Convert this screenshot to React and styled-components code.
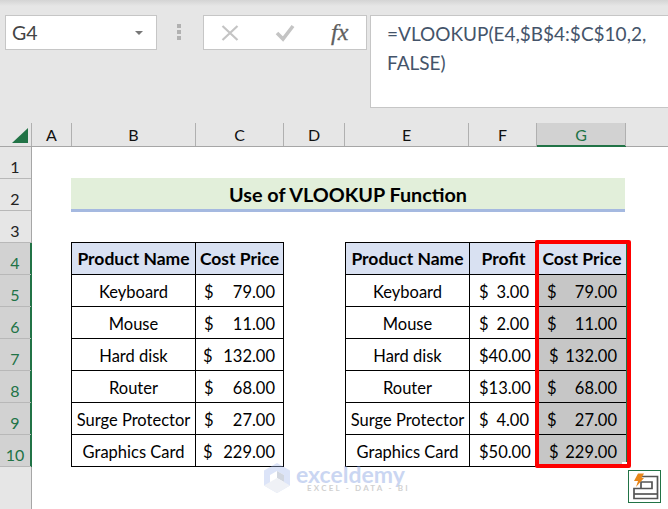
import React from "react";
import styled, { createGlobalStyle } from "styled-components";

const GlobalStyle = createGlobalStyle`
  html, body {
    margin: 0;
    padding: 0;
    background: #fff;
  }
  body {
    font-family: "Lato", "Liberation Sans", sans-serif;
    color: #000;
  }
`;

const Window = styled.div`
  position: relative;
  width: 668px;
  height: 509px;
  overflow: hidden;
  background: #fff;
`;

const FormulaBar = styled.div`
  display: flex;
  align-items: flex-start;
  height: 123px;
  box-sizing: border-box;
  padding: 15px 0 0 5px;
  background: linear-gradient(#d4d4d4 0, #e6e6e6 6px);
`;

const NameBox = styled.div`
  display: flex;
  align-items: center;
  justify-content: space-between;
  width: 152px;
  height: 35px;
  box-sizing: border-box;
  padding: 0 13px 0 6px;
  background: #fff;
  border: 1px solid #c6c6c6;
  font-size: 19.5px;
  color: #444;
`;

const Caret = styled.span`
  width: 0;
  height: 0;
  border-left: 4px solid transparent;
  border-right: 4px solid transparent;
  border-top: 4px solid #777;
`;

const Grip = styled.div`
  display: flex;
  flex-direction: column;
  gap: 2px;
  width: 44px;
  margin-right: 2px;
  padding-top: 9px;
  align-items: center;
  span {
    width: 4px;
    height: 4px;
    background: #b1b1b1;
  }
`;

const FnButtons = styled.div`
  display: flex;
  align-items: center;
  width: 164px;
  height: 35px;
  box-sizing: border-box;
  padding-left: 17px;
  gap: 36px;
  background: #fff;
  border: 1px solid #c6c6c6;
`;

const FxLabel = styled.span`
  font-family: "Liberation Serif", serif;
  font-style: italic;
  font-size: 24px;
  color: #5f5f5f;
  -webkit-text-stroke: 0.3px #5f5f5f;
`;

const FormulaText = styled.div`
  flex: 1;
  height: 93px;
  box-sizing: border-box;
  margin-left: 3px;
  padding: 3px 0 0 16px;
  background: #fff;
  border: 1px solid #c6c6c6;
  border-right: none;
  font-size: 19px;
  line-height: 29px;
  color: #44546a;
`;

const ColumnRow = styled.div`
  display: grid;
  grid-template-columns: 32px 40px 124px 88px 61px 124px 68px 89px 1fr;
  height: 23px;
  background: #e6e6e6;
  border-bottom: 1px solid #a6a6a6;
`;

const Corner = styled.div`
  display: flex;
  align-items: flex-end;
  justify-content: flex-end;
  box-sizing: border-box;
  padding: 0 3px 3px 0;
  border-right: 1px solid #b0b0b0;
`;

const ColumnCell = styled.div`
  display: flex;
  align-items: center;
  justify-content: center;
  font-size: 16px;
  box-sizing: border-box;
  border-right: 1px solid #b0b0b0;
  color: ${(p) => (p.$active ? "#217346" : "#111")};
  background: ${(p) => (p.$active ? "#d2d2d2" : "transparent")};
  box-shadow: ${(p) => (p.$active ? "0 1px 0 #217346, inset 0 -1px 0 #217346" : "none")};
`;

const ColumnRest = styled.div``;

const SheetBody = styled.div`
  display: flex;
`;

const RowHeaders = styled.div`
  width: 32px;
  height: 362px;
  flex: none;
  box-sizing: border-box;
  background: #e6e6e6;
  border-right: 1px solid #a6a6a6;
`;

const RowCell = styled.div`
  display: flex;
  align-items: center;
  justify-content: center;
  height: 32px;
  box-sizing: border-box;
  padding: 8px 1px 0 0;
  font-size: 16px;
  border-bottom: 1px solid #b8b8b8;
  color: ${(p) => (p.$active ? "#217346" : "#222")};
  background: ${(p) => (p.$active ? "#d2d2d2" : "transparent")};
  box-shadow: ${(p) => (p.$active ? "1px 0 0 #217346, inset -1px 0 0 #217346" : "none")};
`;

const Canvas = styled.div`
  padding: 31px 0 0 39px;
`;

const Banner = styled.div`
  display: flex;
  align-items: center;
  justify-content: center;
  width: 554px;
  height: 34px;
  box-sizing: border-box;
  padding-top: 1px;
  background: #e2efda;
  border-bottom: 3px solid #a5b9e0;
  font-size: 19.8px;
  font-weight: bold;
`;

const Tables = styled.div`
  display: flex;
  gap: 61px;
  margin-top: 30px;
`;

const TableWrap = styled.div`
  position: relative;
`;

const DataTable = styled.table`
  border-collapse: collapse;
  table-layout: fixed;
  width: ${(p) => p.$width}px;
  font-size: 16.5px;
  border: 1px solid #000;
`;

const HeadCell = styled.th`
  height: 32px;
  width: ${(p) => p.$width}px;
  box-sizing: border-box;
  padding: 0;
  border: 1px solid #000;
  background: #d9e1f2;
  font-size: 17.5px;
  font-weight: bold;
  white-space: nowrap;
`;

const NameCell = styled.td`
  height: 32px;
  box-sizing: border-box;
  padding: 2px 0 0;
  border: 1px solid #000;
  text-align: center;
  white-space: nowrap;
`;

const MoneyCell = styled.td`
  height: 32px;
  box-sizing: border-box;
  padding: 2px 0 0;
  border: 1px solid #000;
  background: ${(p) => (p.$selected ? "#c6c6c6" : "#fff")};
`;

const Money = styled.div`
  display: flex;
  justify-content: space-between;
  padding: 0 ${(p) => p.$right}px 0 ${(p) => p.$left}px;
  white-space: nowrap;
`;

const RedFrame = styled.div`
  position: absolute;
  left: 189.5px;
  top: -2px;
  width: 96px;
  height: 228px;
  box-sizing: border-box;
  border: 4.5px solid #fe0000;
  border-radius: 2px;
  pointer-events: none;
`;

const SelectionEdge = styled.div`
  position: absolute;
  top: 0;
  bottom: 0;
  right: 0;
  width: 1px;
  background: #217346;
  &::after {
    content: "";
    position: absolute;
    right: 0;
    bottom: 0;
    width: 5px;
    height: 2px;
    background: #fff;
  }
`;

const Watermark = styled.div`
  position: absolute;
  left: 263px;
  top: 463px;
  display: flex;
  align-items: flex-start;
  gap: 5px;
  opacity: 0.4;
`;

const WatermarkText = styled.div`
  display: flex;
  flex-direction: column;
  padding-top: 2px;
`;

const WatermarkName = styled.span`
  font-size: 23px;
  line-height: 19px;
  font-weight: bold;
  color: #7d9be0;
`;

const WatermarkTag = styled.span`
  padding-left: 11px;
  font-size: 8px;
  line-height: 9px;
  letter-spacing: 2.2px;
  color: #8c8c8c;
  font-weight: bold;
`;

const PasteButton = styled.div`
  position: absolute;
  left: 628px;
  top: 470px;
  display: flex;
  align-items: center;
  justify-content: center;
  width: 33px;
  height: 33px;
  box-sizing: border-box;
  background: #fff;
  border: 1px solid #217346;
`;

const columns = [
  { label: "A" },
  { label: "B" },
  { label: "C" },
  { label: "D" },
  { label: "E" },
  { label: "F" },
  { label: "G", active: true },
];

const rows = [
  { name: "Keyboard", cost: "79.00", profit: "3.00" },
  { name: "Mouse", cost: "11.00", profit: "2.00" },
  { name: "Hard disk", cost: "132.00", profit: "$40.00" },
  { name: "Router", cost: "68.00", profit: "$13.00" },
  { name: "Surge Protector", cost: "27.00", profit: "4.00" },
  { name: "Graphics Card", cost: "229.00", profit: "$50.00" },
];

const CrossIcon = () => (
  <svg width="18" height="18" viewBox="0 0 18 18">
    <path d="M1.5 2 L16.5 16 M16.5 2 L1.5 16" stroke="#c4c4c4" strokeWidth="2.2" fill="none" />
  </svg>
);

const CheckIcon = () => (
  <svg width="20" height="18" viewBox="0 0 20 18">
    <path d="M2 9 L8 15 L18 2" stroke="#c4c4c4" strokeWidth="3.6" fill="none" />
  </svg>
);

const CornerTriangle = () => (
  <svg width="16" height="15" viewBox="0 0 16 15">
    <path d="M16 0 V15 H0 Z" fill="#217346" />
  </svg>
);

const LogoMark = () => (
  <svg width="28" height="30" viewBox="0 0 28 30">
    <path d="M14 0 L27 7.5 V22.5 L14 30 L1 22.5 V7.5 Z" fill="#a9bdee" />
    <path d="M14 8 L21 12 V19 L14 23 L7 19 V12 Z" fill="#fff" />
    <path d="M14 8 L21 12 V19 L14 15 Z" fill="#8e9ab0" />
    <path d="M1 22.5 L14 15 L27 22.5 L14 30 Z" fill="#d9deea" />
  </svg>
);

const PasteIcon = () => (
  <svg width="28" height="28" viewBox="0 0 28 28">
    <path d="M10 3.5 H26.5 V25.5 H3 V15.5 H21 V9 H10 V15.5" stroke="#555" strokeWidth="1.7" fill="none" />
    <path d="M3 21 H26.5" stroke="#555" strokeWidth="1.7" fill="none" />
    <path d="M7 0.5 H13 L10.5 5 H13 L5 14 L7 8 H3 Z" fill="#e8861a" />
  </svg>
);

const MoneyValue = ({ value, left, right }) => {
  const whole = value.startsWith("$");
  return (
    <Money $left={left} $right={right}>
      {!whole && <span>$</span>}
      <span>{value}</span>
    </Money>
  );
};

const App = () => {
  return (
    <Window>
      <GlobalStyle />
      <FormulaBar>
        <NameBox>
          G4
          <Caret />
        </NameBox>
        <Grip>
          <span />
          <span />
          <span />
        </Grip>
        <FnButtons>
          <CrossIcon />
          <CheckIcon />
          <FxLabel>fx</FxLabel>
        </FnButtons>
        <FormulaText>
          =VLOOKUP(E4,$B$4:$C$10,2,
          <br />
          FALSE)
        </FormulaText>
      </FormulaBar>

      <ColumnRow>
        <Corner>
          <CornerTriangle />
        </Corner>
        {columns.map((col) => (
          <ColumnCell key={col.label} $active={col.active}>
            {col.label}
          </ColumnCell>
        ))}
        <ColumnRest />
      </ColumnRow>

      <SheetBody>
        <RowHeaders>
          {[1, 2, 3, 4, 5, 6, 7, 8, 9, 10].map((n) => (
            <RowCell key={n} $active={n >= 4}>
              {n}
            </RowCell>
          ))}
        </RowHeaders>
        <Canvas>
          <Banner>Use of VLOOKUP Function</Banner>
          <Tables>
            <TableWrap>
              <DataTable $width={212}>
                <thead>
                  <tr>
                    <HeadCell $width={124}>Product Name</HeadCell>
                    <HeadCell $width={88}>Cost Price</HeadCell>
                  </tr>
                </thead>
                <tbody>
                  {rows.map((row) => (
                    <tr key={row.name}>
                      <NameCell>{row.name}</NameCell>
                      <MoneyCell>
                        <MoneyValue value={row.cost} left={row.cost.length > 5 ? 7 : 8} right={8} />
                      </MoneyCell>
                    </tr>
                  ))}
                </tbody>
              </DataTable>
            </TableWrap>
            <TableWrap>
              <DataTable $width={281}>
                <thead>
                  <tr>
                    <HeadCell $width={124}>Product Name</HeadCell>
                    <HeadCell $width={68}>Profit</HeadCell>
                    <HeadCell $width={89}>Cost Price</HeadCell>
                  </tr>
                </thead>
                <tbody>
                  {rows.map((row) => (
                    <tr key={row.name}>
                      <NameCell>{row.name}</NameCell>
                      <MoneyCell>
                        <MoneyValue value={row.profit} left={9} right={8} />
                      </MoneyCell>
                      <MoneyCell $selected>
                        <MoneyValue value={row.cost} left={row.cost.length > 5 ? 11 : 9} right={9} />
                      </MoneyCell>
                    </tr>
                  ))}
                </tbody>
              </DataTable>
              <RedFrame>
                <SelectionEdge />
              </RedFrame>
            </TableWrap>
          </Tables>
        </Canvas>
      </SheetBody>

      <Watermark>
        <LogoMark />
        <WatermarkText>
          <WatermarkName>exceldemy</WatermarkName>
          <WatermarkTag>EXCEL - DATA - BI</WatermarkTag>
        </WatermarkText>
      </Watermark>
      <PasteButton>
        <PasteIcon />
      </PasteButton>
    </Window>
  );
};

export default App;
